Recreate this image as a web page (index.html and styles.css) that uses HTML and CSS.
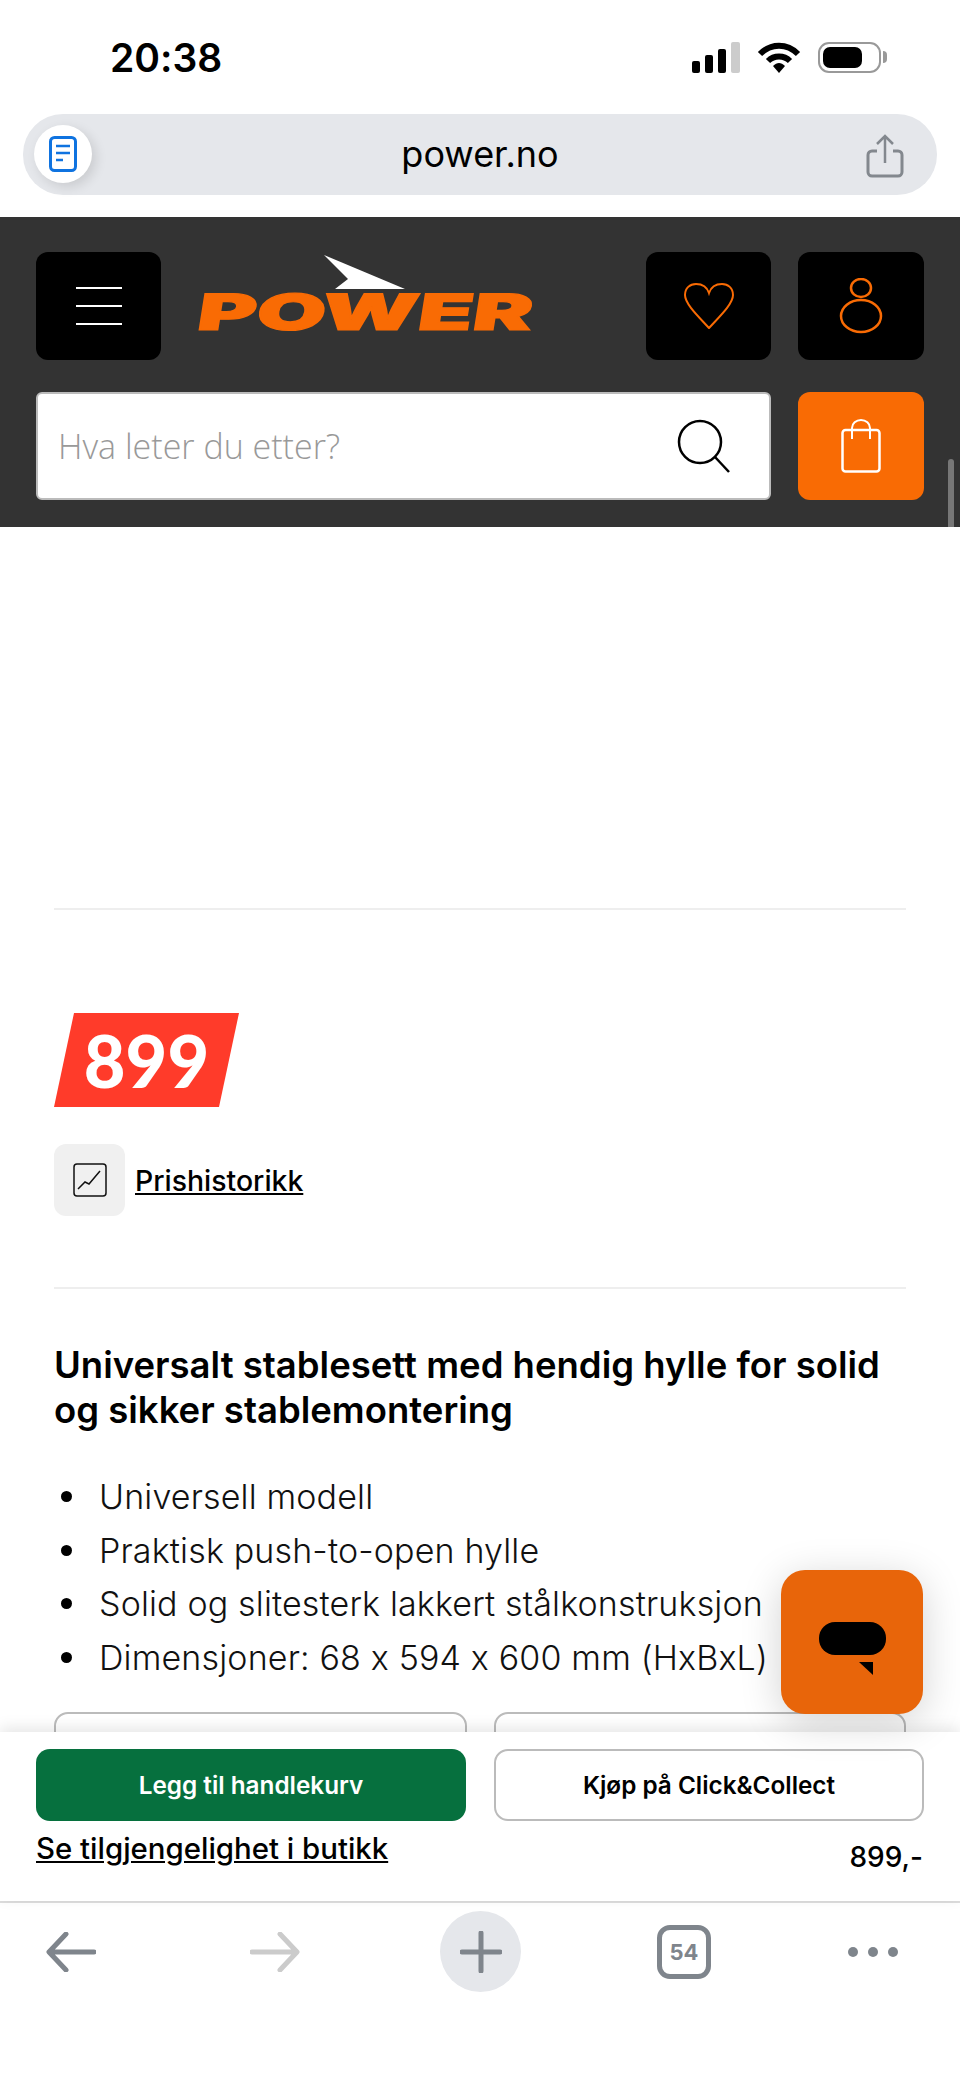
FILE: index.html
```html
<!DOCTYPE html>
<html lang="no">
<head>
  <meta charset="UTF-8">
  <title>power.no</title>
  <link rel="stylesheet" href="styles.css">
</head>
<body>
  <div class="page">
    <!-- status bar -->
    <div class="status">
      <span class="time">20:38</span>
      <div class="status-icons">
        <svg class="signal" width="50" height="31" viewBox="0 0 50 31">
          <rect x="0" y="19" width="8" height="12" rx="2" fill="#000"/>
          <rect x="13" y="13" width="8" height="18" rx="2" fill="#000"/>
          <rect x="26" y="7" width="8" height="24" rx="2" fill="#000"/>
          <rect x="39" y="0" width="9" height="31" rx="2" fill="#ccc"/>
        </svg>
        <svg class="wifi" width="44" height="31" viewBox="0 0 44 31">
          <path d="M3 12 C14 1 30 1 41 12" fill="none" stroke="#000" stroke-width="6"/>
          <path d="M11 19 C17 13 27 13 33 19" fill="none" stroke="#000" stroke-width="6"/>
          <path d="M16 24 C20 20 24 20 28 24 L22 31 Z" fill="#000"/>
        </svg>
        <div class="battery"><div class="battery-level"></div></div>
        <div class="battery-nub"></div>
      </div>
    </div>

    <!-- address bar -->
    <div class="address-wrap">
      <div class="address">
        <div class="reader">
          <svg width="28" height="36" viewBox="0 0 28 36">
            <rect x="1.5" y="1.5" width="25" height="33" rx="4" fill="none" stroke="#0f73e0" stroke-width="3"/>
            <path d="M7 10H21M7 17H21M7 24H14" stroke="#0f73e0" stroke-width="2.5"/>
          </svg>
        </div>
        <span class="url">power.no</span>
        <svg class="share" width="38" height="44" viewBox="0 0 38 44">
          <path d="M11 17H6a4 4 0 0 0-4 4v17a4 4 0 0 0 4 4h26a4 4 0 0 0 4-4V21a4 4 0 0 0-4-4h-5" fill="none" stroke="#83888e" stroke-width="3"/>
          <path d="M19 29V3M11 10l8-8 8 8" fill="none" stroke="#83888e" stroke-width="2.5"/>
        </svg>
      </div>
    </div>

    <!-- site header -->
    <div class="header">
      <div class="header-row">
        <div class="btn-black">
          <svg width="46" height="40" viewBox="0 0 46 40">
            <path d="M0 2H46M0 20H46M0 38H46" stroke="#fff" stroke-width="2"/>
          </svg>
        </div>
        <svg class="logo" width="340" height="110" viewBox="0 0 340 110">
          <path d="M129 4 L210 38 L140 38 L153 28 Z" fill="#fff"/>
          <text class="logo-text" x="0" y="79" textLength="335" lengthAdjust="spacingAndGlyphs" transform="skewX(-9) translate(13 0)">POWER</text>
        </svg>
        <div class="btn-black">
          <svg width="50" height="46" viewBox="0 0 50 46">
            <path d="M25 45 C15 34 1 21 1 12 C1 5 6 1 12 1 C18 1 23 4 25 10 C27 4 32 1 38 1 C44 1 49 5 49 12 C49 21 35 34 25 45 Z" fill="none" stroke="#f96b04" stroke-width="2"/>
          </svg>
        </div>
        <div class="btn-black">
          <svg width="44" height="56" viewBox="0 0 44 56">
            <ellipse cx="22" cy="10" rx="10" ry="9" fill="none" stroke="#f96b04" stroke-width="2.5"/>
            <ellipse cx="22" cy="38" rx="20" ry="16" fill="none" stroke="#f96b04" stroke-width="2.5"/>
          </svg>
        </div>
      </div>
      <div class="header-row">
        <div class="search">
          <span class="search-hint">Hva leter du etter?</span>
          <svg width="54" height="54" viewBox="0 0 54 54">
            <circle cx="23" cy="23" r="21" fill="none" stroke="#000" stroke-width="2.5"/>
            <path d="M38 38L52 53" stroke="#000" stroke-width="2.5"/>
          </svg>
        </div>
        <div class="btn-cart">
          <svg width="40" height="54" viewBox="0 0 40 54">
            <rect x="1.5" y="11" width="37" height="41.5" rx="3" fill="none" stroke="#fff" stroke-width="2.5"/>
            <path d="M11 20V9a9 8 0 0 1 18 0v11" fill="none" stroke="#fff" stroke-width="2"/>
          </svg>
        </div>
      </div>
      <div class="scroll-thumb"></div>
    </div>

    <!-- product -->
    <div class="main">
      <div class="gallery"></div>
      <div class="divider"></div>
      <div class="price-tag"><span>899</span></div>
      <div class="history">
        <div class="history-icon">
          <svg width="34" height="34" viewBox="0 0 34 34">
            <rect x="1" y="1" width="32" height="32" rx="3" fill="none" stroke="#111" stroke-width="1.5"/>
            <path d="M5 26L12 19L16 21L27 8" fill="none" stroke="#111" stroke-width="1.5"/>
          </svg>
        </div>
        <a href="#" class="history-link">Prishistorikk</a>
      </div>
      <div class="divider"></div>
      <h1 class="title">Universalt stablesett med hendig hylle for solid og sikker stablemontering</h1>
      <ul class="features">
        <li>Universell modell</li>
        <li>Praktisk push-to-open hylle</li>
        <li>Solid og slitesterk lakkert stålkonstruksjon</li>
        <li>Dimensjoner: 68 x 594 x 600 mm (HxBxL)</li>
      </ul>
      <div class="ghost-row">
        <div class="ghost"></div>
        <div class="ghost"></div>
      </div>
    </div>

    <!-- sticky buy bar -->
    <div class="buy">
      <div class="buy-buttons">
        <a href="#" class="btn-green">Legg til handlekurv</a>
        <a href="#" class="btn-white">Kjøp på Click&amp;Collect</a>
      </div>
      <div class="buy-info">
        <a href="#" class="stock-link">Se tilgjengelighet i butikk</a>
        <span class="buy-price">899,-</span>
      </div>
    </div>

    <!-- browser toolbar -->
    <div class="toolbar">
      <svg class="tool-back" width="50" height="40" viewBox="0 0 50 40">
        <path d="M48 20H4M20 2L3 20L20 38" fill="none" stroke="#7f858c" stroke-width="5" stroke-linecap="round" stroke-linejoin="round"/>
      </svg>
      <svg class="tool-forward" width="50" height="40" viewBox="0 0 50 40">
        <path d="M2 20H46M30 2L47 20L30 38" fill="none" stroke="#cbcbcb" stroke-width="5" stroke-linecap="round" stroke-linejoin="round"/>
      </svg>
      <div class="tool-plus">
        <svg width="42" height="42" viewBox="0 0 42 42">
          <path d="M21 2V40M2 21H40" stroke="#7f858c" stroke-width="5" stroke-linecap="round"/>
        </svg>
      </div>
      <div class="tool-tabs">54</div>
      <div class="tool-more"><i></i><i></i><i></i></div>
    </div>

    <!-- chat -->
    <div class="chat">
      <svg width="68" height="54" viewBox="0 0 68 54">
        <rect x="0" y="0" width="67" height="33" rx="16" fill="#000"/>
        <path d="M40 40H54V53Z" fill="#000"/>
      </svg>
    </div>
  </div>
</body>
</html>
```
FILE: styles.css
```css
* {
  box-sizing: border-box;
}
html, body {
  margin: 0;
  background: #fff;
}
a {
  color: inherit;
}
.page {
  position: relative;
  display: flex;
  flex-direction: column;
  width: 960px;
  height: 2077px;
  overflow: hidden;
  font-family: Inter, "Liberation Sans", sans-serif;
  font-feature-settings: "calt" 0;
  color: #000;
}

/* status bar */
.status {
  display: flex;
  justify-content: space-between;
  align-items: center;
  height: 114px;
  padding: 0 73px 0 110px;
}
.time {
  font-size: 39px;
  font-weight: 600;
}
.status-icons {
  display: flex;
  align-items: center;
}
.wifi {
  margin-left: 15px;
}
.battery {
  width: 63px;
  height: 31px;
  margin-left: 17px;
  padding: 3px;
  border: 2px solid #999;
  border-radius: 11px;
}
.battery-level {
  width: 39px;
  height: 21px;
  background: #000;
  border-radius: 7px;
}
.battery-nub {
  width: 4px;
  height: 12px;
  margin-left: 2px;
  background: #999;
  border-radius: 0 4px 4px 0;
}

/* address bar */
.address-wrap {
  height: 103px;
  padding: 0 23px;
}
.address {
  position: relative;
  display: flex;
  justify-content: center;
  align-items: center;
  height: 81px;
  background: #e5e7eb;
  border-radius: 40px;
}
.reader {
  position: absolute;
  left: 11px;
  top: 11px;
  display: flex;
  justify-content: center;
  align-items: center;
  width: 58px;
  height: 58px;
  background: #fff;
  border-radius: 50%;
  box-shadow: 4px 4px 12px rgba(0, 0, 0, 0.12);
}
.url {
  margin-bottom: 2px;
  font-size: 36px;
}
.share {
  position: absolute;
  right: 33px;
  top: 20px;
}

/* site header */
.header {
  position: relative;
  display: flex;
  flex-direction: column;
  gap: 31px;
  height: 310px;
  padding: 34px 36px 27px 36px;
  background: #333;
}
.header-row {
  display: flex;
  align-items: center;
  gap: 27px;
}
.btn-black {
  display: flex;
  justify-content: center;
  align-items: center;
  width: 125px;
  height: 108px;
  background: #000;
  border-radius: 12px;
}
.header-row > .btn-black:last-child {
  width: 126px;
}
.logo {
  margin: 0 auto 0 7px;
}
.logo-text {
  font-family: Inter, sans-serif;
  font-size: 50px;
  font-weight: 900;
  fill: #f96b04;
  stroke: #f96b04;
  stroke-width: 1.2px;
}
.search {
  display: flex;
  justify-content: space-between;
  align-items: center;
  flex: 1;
  height: 108px;
  padding: 0 38px 0 20px;
  background: #fff;
  border: 2px solid #bbb;
  border-radius: 6px;
}
.search-hint {
  font-family: "Open Sans", sans-serif;
  font-size: 34px;
  font-weight: 300;
  color: #999;
}
.btn-cart {
  display: flex;
  justify-content: center;
  align-items: center;
  width: 126px;
  height: 108px;
  background: #f96b04;
  border-radius: 12px;
}
.scroll-thumb {
  position: absolute;
  right: 6px;
  bottom: 0;
  width: 6px;
  height: 68px;
  background: #777;
  border-radius: 3px 3px 0 0;
}

/* product */
.main {
  flex: 1;
  min-height: 0;
  overflow: hidden;
  padding: 0 54px;
}
.gallery {
  height: 381px;
}
.divider {
  height: 2px;
  background: #eee;
}
.price-tag {
  display: flex;
  justify-content: center;
  align-items: center;
  width: 185px;
  height: 94px;
  margin-top: 103px;
  background: #ff3b2a;
  clip-path: polygon(20px 0, 185px 0, 165px 94px, 0 94px);
  color: #fff;
  font-family: Lato, sans-serif;
  font-size: 72px;
  font-weight: 900;
}
.history {
  display: flex;
  align-items: center;
  gap: 10px;
  margin-top: 37px;
  margin-bottom: 71px;
}
.history-icon {
  display: flex;
  justify-content: center;
  align-items: center;
  width: 71px;
  height: 72px;
  background: #f0f0f0;
  border-radius: 12px;
}
.history-link {
  font-size: 28.4px;
  font-weight: 500;
}
.title {
  margin: 54px 0 37px;
  font-size: 36.5px;
  font-weight: 600;
  line-height: 45px;
}
.features {
  margin: 0;
  padding: 0 0 0 7px;
  list-style: none;
  font-size: 34px;
  font-weight: 300;
  letter-spacing: 0.15px;
  line-height: 53.5px;
  color: #111;
}
.features li {
  display: flex;
  align-items: center;
  gap: 27px;
}
.features li::before {
  content: "";
  flex: none;
  width: 11px;
  height: 11px;
  background: #000;
  border-radius: 50%;
}
.ghost-row {
  display: flex;
  gap: 27px;
  margin-top: 28px;
}
.ghost {
  flex: 1;
  height: 72px;
  border: 2px solid #bbb;
  border-radius: 14px;
}

/* sticky buy bar */
.buy {
  position: relative;
  height: 169px;
  padding: 17px 36px 0 36px;
  background: #fff;
  box-shadow: 0 -4px 14px rgba(0, 0, 0, 0.1);
}
.buy-buttons {
  display: flex;
  gap: 28px;
}
.btn-green, .btn-white {
  display: flex;
  justify-content: center;
  align-items: center;
  flex: none;
  width: 430px;
  height: 72px;
  border-radius: 14px;
  font-size: 24.3px;
  font-weight: 600;
  text-decoration: none;
}
.btn-green {
  background: #06703e;
  color: #fff;
}
.btn-white {
  background: #fff;
  border: 2px solid #bbb;
}
.buy-info {
  display: flex;
  justify-content: space-between;
  padding-top: 10px;
}
.stock-link {
  font-size: 29.4px;
  font-weight: 500;
  line-height: 36px;
}
.buy-price {
  margin: 8px 1px 0 0;
  font-size: 28px;
  font-weight: 500;
  line-height: 36px;
}

/* browser toolbar */
.toolbar {
  display: flex;
  align-items: flex-start;
  height: 176px;
  padding: 8px 0 0 46px;
  background: #fff;
  border-top: 2px solid #ddd;
}
.tool-back {
  margin-top: 21px;
}
.tool-forward {
  margin: 21px 0 0 154px;
}
.tool-plus {
  display: flex;
  justify-content: center;
  align-items: center;
  width: 81px;
  height: 81px;
  margin-left: 140px;
  background: #e5e7eb;
  border-radius: 50%;
}
.tool-tabs {
  display: flex;
  justify-content: center;
  align-items: center;
  width: 54px;
  height: 54px;
  margin: 14px 0 0 136px;
  border: 5px solid #7f858c;
  border-radius: 13px;
  color: #7f858c;
  font-size: 22px;
  font-weight: 700;
}
.tool-more {
  display: flex;
  gap: 10px;
  margin: 36px 0 0 137px;
}
.tool-more i {
  width: 10px;
  height: 10px;
  background: #7f858c;
  border-radius: 50%;
}

/* chat */
.chat {
  position: absolute;
  left: 781px;
  top: 1570px;
  width: 142px;
  height: 144px;
  padding: 52px 0 0 38px;
  background: #e8650a;
  border-radius: 24px;
  box-shadow: 0 8px 40px rgba(0, 0, 0, 0.18);
}
```
